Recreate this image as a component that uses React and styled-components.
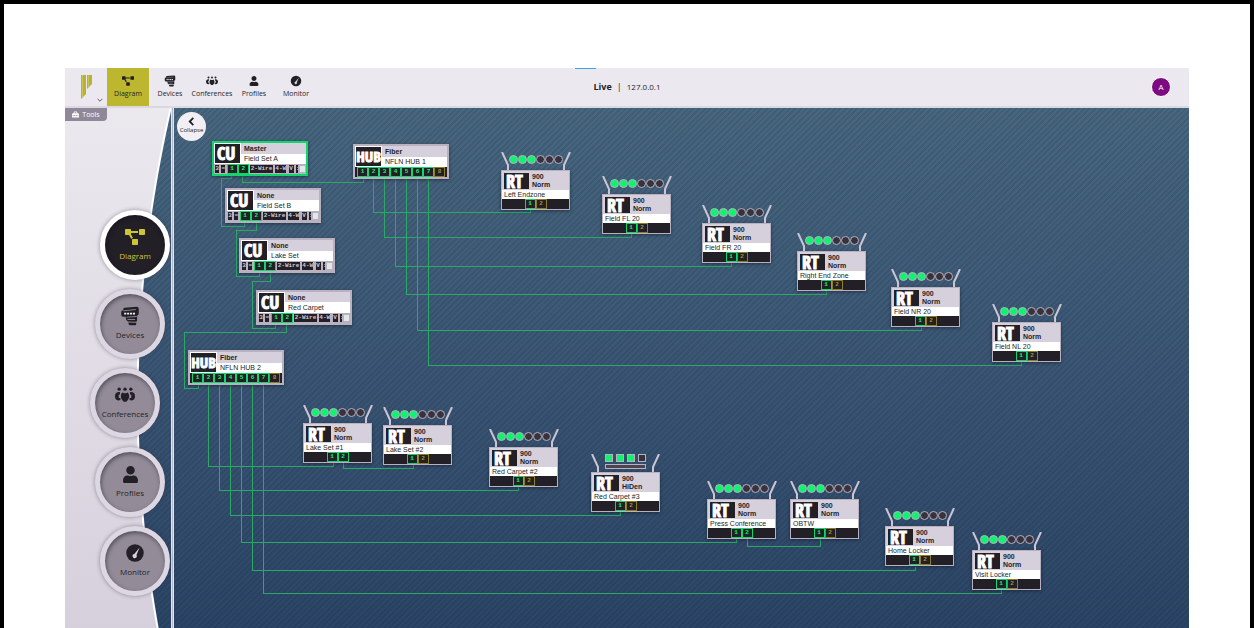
import React from "react";
import styled, { createGlobalStyle, css } from "styled-components";
import { FaProjectDiagram, FaUser, FaToolbox } from "react-icons/fa";

const ui = `"Open Sans", "Noto Sans", sans-serif`;
const node = `"Liberation Sans", Arial, sans-serif`;
const narrow = `"Open Sans Condensed", "Roboto Condensed", Roboto, "Liberation Sans", sans-serif`;

const c = {
  header: "#ece8ef",
  lilac: "#d6cfdc",
  edge: "#b9b1c0",
  ink: "#221f27",
  olive: "#bdb72f",
  green: "#12d66b",
  led: "#0df56f",
  wire: "#2ba865",
  amber: "#8c7f20",
};

const Global = createGlobalStyle`
  *, *::before, *::after { box-sizing: border-box; }
  body { margin: 0; background: #fff; font-family: ${ui}; color: ${c.ink}; }
  a { color: inherit; text-decoration: none; }
`;

const Page = styled.div`
  min-height: 100vh;
  display: flex;
  border: 4px solid #000;
  border-bottom: 0;
  padding: 64px 61px 0;
`;

const AppFrame = styled.div`
  flex: 1;
  min-width: 0;
  display: flex;
  flex-direction: column;
`;

const Header = styled.header`
  position: relative;
  display: grid;
  grid-template-columns: 1fr auto 1fr;
  align-items: center;
  height: 40px;
  background: ${c.header};
  border-bottom: 2px solid #dcd8e2;
  &::before {
    content: "";
    position: absolute;
    top: 0;
    left: calc(50% - 52px);
    width: 21px;
    height: 1px;
    background: #3fa4ee;
  }
`;

const HeaderLeft = styled.div`
  display: flex;
  height: 38px;
`;

const LogoButton = styled.button`
  width: 42px;
  padding: 6px 4px 3px 15px;
  border: 0;
  background: none;
  color: #55505a;
  display: flex;
  align-items: flex-end;
  justify-content: space-between;
`;

const Logo = styled.svg`
  align-self: flex-start;
`;

const TopNav = styled.nav`
  display: flex;
`;

const TopLink = styled.a`
  width: 42px;
  display: flex;
  flex-direction: column;
  align-items: center;
  gap: 2px;
  padding-top: 7px;
  font-size: 7px;
  line-height: 10px;
  background: ${(p) => (p.$active ? c.olive : "transparent")};
`;

const TopIcon = styled.span`
  display: flex;
  align-items: center;
  height: 12px;
  svg { width: ${(p) => (p.$compact ? 10 : 12)}px; height: ${(p) => (p.$compact ? 10 : 12)}px; }
`;

const Status = styled.div`
  display: flex;
  align-items: center;
  gap: 5px;
  font-size: 9px;
  line-height: 12px;
`;

const Address = styled.span`
  font-size: 8px;
`;

const Avatar = styled.button`
  justify-self: end;
  margin-right: 18px;
  width: 20px;
  height: 20px;
  padding: 0;
  border: 1px solid #fff;
  border-radius: 50%;
  background: #7d0a80;
  color: #fff;
  font: 8px/16px ${ui};
`;

const Body = styled.div`
  flex: 1;
  display: flex;
  overflow: hidden;
  background:
    repeating-linear-gradient(135deg, rgba(10, 30, 50, 0.13) 0 2px, transparent 2px 4px),
    linear-gradient(#48677f, #3b5674 50%, #2c4566);
`;

const Sidebar = styled.aside`
  position: relative;
  width: 106px;
  flex: none;
  &::before {
    content: "";
    position: absolute;
    inset: 0;
    background:
      radial-gradient(circle at 1373px 292px, #fff 1301px, transparent 1302px),
      linear-gradient(#ebe8ee, #d6d0dc);
    mask-image: radial-gradient(circle at 1373px 292px, transparent 1299px, #000 1300px);
  }
`;

const SidebarContent = styled.div`
  position: relative;
`;

const ToolsTab = styled.button`
  display: flex;
  align-items: center;
  justify-content: center;
  gap: 3px;
  width: 42px;
  height: 13px;
  padding: 0;
  border: 0;
  border-radius: 0 0 4px 0;
  background: #8f8898;
  color: #fff;
  font: 7px/10px ${ui};
`;

const SideNav = styled.nav`
  display: flex;
  flex-direction: column;
  gap: 9px;
  padding-top: 89px;
`;

const RoundLink = styled.a`
  width: 70px;
  height: 70px;
  margin-left: ${(p) => p.$indent}px;
  border: 5px solid ${(p) => (p.$active ? "#fff" : "#ddd7e3")};
  border-radius: 50%;
  background: ${(p) => (p.$active ? c.ink : "#938c98")};
  color: ${(p) => (p.$active ? "#cdc632" : c.ink)};
  box-shadow: 0 0 4px rgba(50, 40, 60, 0.45), inset 1px 2px 4px rgba(20, 15, 30, 0.5);
  display: flex;
  flex-direction: column;
  align-items: center;
  gap: 3px;
  padding-top: 12px;
  font-size: 8px;
  line-height: 12px;
`;

const RoundIcon = styled.span`
  display: flex;
  align-items: center;
  height: 20px;
  svg { width: ${(p) => (p.$compact ? 17 : 20)}px; height: ${(p) => (p.$compact ? 17 : 20)}px; }
`;

const Divider = styled.div`
  width: 3px;
  flex: none;
  background: #b5b9c9;
  border-left: 1px solid #e4e2ea;
  border-right: 1px solid #e4e2ea;
`;

const Canvas = styled.main`
  position: relative;
  flex: 1;
  min-width: 0;
  overflow: hidden;
  font-family: ${node};
`;

const CollapseButton = styled.button`
  position: absolute;
  left: 3px;
  top: 4px;
  width: 29px;
  height: 29px;
  padding: 5px 0 0;
  border: 0;
  border-radius: 50%;
  background: #f1eef4;
  color: ${c.ink};
  display: flex;
  flex-direction: column;
  align-items: center;
  font: 6px/9px ${ui};
`;

const Wires = styled.svg`
  position: absolute;
  inset: 0;
  width: 100%;
  height: 100%;
  fill: none;
  stroke: ${c.wire};
  shape-rendering: crispEdges;
`;

const placed = css`
  position: absolute;
  left: ${(p) => p.$x}px;
  top: ${(p) => p.$y}px;
`;

const RackCard = styled.article`
  ${placed}
  width: 96px;
  border: 2px solid ${(p) => (p.$selected ? c.green : c.edge)};
  background: #fff;
  box-shadow: 0 1px 3px rgba(10, 15, 30, 0.5);
`;

const RackTop = styled.div`
  display: flex;
  height: 21px;
  background: linear-gradient(${c.lilac} 50%, #fff 50%);
`;

const Badge = styled.div`
  width: 27px;
  flex: none;
  padding-left: ${(p) => (p.$wide ? 0 : 2)}px;
  border: 1px solid ${(p) => (p.$flat ? c.lilac : "#fff")};
  background: ${c.ink};
  color: #fff;
  display: flex;
  align-items: center;
  justify-content: ${(p) => (p.$wide ? "center" : "flex-start")};
  font-family: ${narrow};
  font-weight: 700;
  font-size: ${(p) => (p.$wide ? 15 : 18)}px;
  line-height: 17px;
  -webkit-text-stroke: 1px #fff;
`;

const RackLabels = styled.div`
  padding: 1px 0 0 3px;
  font-size: 7px;
  line-height: 10px;
  white-space: nowrap;
`;

const PortRow = styled.div`
  display: flex;
  justify-content: center;
  height: 10px;
  background: ${c.ink};
`;

const IoRow = styled.div`
  display: flex;
  justify-content: space-between;
  height: 10px;
  background: ${c.edge};
`;

const Port = styled.span`
  width: 11px;
  height: 10px;
  border: 1px solid ${(p) => (p.$on ? c.green : c.amber)};
  background: ${c.ink};
  color: ${(p) => (p.$on ? c.led : "#a5962b")};
  font: 700 6px/8px "Liberation Mono", monospace;
  text-align: center;
`;

const Io = styled.span`
  width: ${(p) => p.$w}px;
  height: 10px;
  border: 1px solid ${c.edge};
  background: ${c.ink};
  color: #d2ccd8;
  font: 700 6px/8px "Liberation Mono", monospace;
  text-align: center;
  overflow: hidden;
  white-space: nowrap;
`;

const Screen = styled.span`
  width: 5px;
  height: 6px;
  margin: 2px 1px;
  background: #dfe9e6;
`;

const RadioUnit = styled.article`
  ${placed}
  width: 69px;
`;

const SignalRow = styled.div`
  display: flex;
  height: 18px;
  svg { width: 8px; height: 18px; flex: none; }
`;

const Leds = styled.div`
  flex: 1;
  display: flex;
  height: 14px;
  align-items: center;
`;

const Led = styled.span`
  width: 9px;
  height: 9px;
  border: 1px solid ${c.edge};
  border-radius: 50%;
  background: ${(p) => (p.$on ? c.led : "#37323c")};
`;

const DenseLeds = styled.div`
  flex: 1;
  display: grid;
  grid-template-columns: repeat(4, 8px);
  column-gap: 3px;
  row-gap: 2px;
  justify-content: center;
  align-content: start;
`;

const SquareLed = styled.span`
  height: 8px;
  border: 1px solid ${c.edge};
  background: ${(p) => (p.$on ? c.led : "#37323c")};
`;

const LedBar = styled.span`
  grid-column: 1 / -1;
  height: 5px;
  border: 1px solid ${c.edge};
  background: #4a4450;
`;

const RadioBox = styled.div`
  border: 1px solid ${c.edge};
  background: ${c.lilac};
  box-shadow: 0 1px 3px rgba(10, 15, 30, 0.5);
`;

const RadioTop = styled.div`
  display: flex;
  height: 19px;
  gap: 2px;
  padding: 1px 1px 0;
`;

const RadioType = styled.div`
  font-size: 7px;
  font-weight: 700;
  line-height: 8px;
  padding-top: 1px;
`;

const RadioName = styled.div`
  height: 9px;
  padding-left: 2px;
  background: #fff;
  font-size: 7px;
  line-height: 9px;
  white-space: nowrap;
`;

const DevicesIcon = () => (
  <svg viewBox="0 0 24 24" fill="currentColor" aria-hidden="true">
    <path d="M4 3.5 Q4 2 6 2 L20 1 Q22.500 1 22.500 3.500 V9 Q22.500 11 20.500 11.500 V17 Q20.500 19 19 19 L9.500 18.500 Q7 18 7 14.500 V13 L4 13 Q1.500 13 1.500 10.500 V7 Q1.500 5 4 5Z" />
    <path d="M4 5.800 L19 4.200" stroke="#b8b0be" strokeWidth=".8" fill="none" />
    <path d="M5 9.200 H18" stroke="#f2eff5" strokeWidth="2" strokeDasharray="2.500 1" fill="none" />
    <path d="M8 13.500 L20 12.500 M9 16.200 H18" stroke="#b8b0be" strokeWidth=".8" fill="none" />
    <path d="M10 19.800 L19.500 20 V21.500 Q19.500 23 18 23 H12 Q10 23 10 19.800Z" />
  </svg>
);

const ConferencesIcon = () => (
  <svg viewBox="0 0 24 24" fill="currentColor" aria-hidden="true">
    <circle cx="5" cy="5" r="2" />
    <circle cx="12" cy="5" r="2" />
    <circle cx="19" cy="5" r="2" />
    <path d="M6 8.500 Q0 8 0 13.500 Q0 18 4 18.500 L6.500 18 V15.500 H4.500 V11.500 H6Z" />
    <path d="M18 8.500 Q24 8 24 13.500 Q24 18 20 18.500 L17.500 18 V15.500 H19.500 V11.500 H18Z" />
    <path d="M8.500 9 Q12 11 15.500 9 Q18.500 13 15.500 18 L13.500 20 H10.500 L8.500 18 Q5.500 13 8.500 9Z" />
  </svg>
);

const MonitorIcon = () => (
  <svg viewBox="0 0 24 24" fill="currentColor" aria-hidden="true">
    <circle cx="12" cy="12" r="10.500" />
    <path d="M17.500 5.500 L13.800 14.500 A2.500 2.500 0 1 1 11.200 13.200Z" fill="#d9d3df" />
  </svg>
);

const Chevron = ({ d, size, weight }) => (
  <svg width={size} height={size} viewBox="0 0 10 10" fill="none" stroke="currentColor" strokeWidth={weight} aria-hidden="true">
    <path d={d} />
  </svg>
);

const sections = [
  { label: "Diagram", Icon: FaProjectDiagram, indent: 35 },
  { label: "Devices", Icon: DevicesIcon, indent: 30 },
  { label: "Conferences", Icon: ConferencesIcon, indent: 25 },
  { label: "Profiles", Icon: FaUser, indent: 30, compact: true },
  { label: "Monitor", Icon: MonitorIcon, indent: 35 },
];

const controlUnits = [
  { x: 38, y: 33, role: "Master", name: "Field Set A", selected: true },
  { x: 51, y: 80, role: "None", name: "Field Set B" },
  { x: 65, y: 130, role: "None", name: "Lake Set" },
  { x: 82, y: 182, role: "None", name: "Red Carpet" },
];

const hubs = [
  { x: 179, y: 36, name: "NFLN HUB 1" },
  { x: 14, y: 242, name: "NFLN HUB 2" },
];

const radios = [
  { x: 327, y: 44, name: "Left Endzone" },
  { x: 428, y: 68, name: "Field FL 20" },
  { x: 528, y: 97, name: "Field FR 20" },
  { x: 623, y: 125, name: "Right End Zone" },
  { x: 717, y: 161, name: "Field NR 20" },
  { x: 818, y: 196, name: "Field NL 20" },
  { x: 129, y: 297, name: "Lake Set #1", linked: true },
  { x: 209, y: 299, name: "Lake Set #2" },
  { x: 315, y: 321, name: "Red Carpet #2" },
  { x: 417, y: 346, name: "Red Carpet #3", dense: true },
  { x: 533, y: 373, name: "Press Conference", linked: true },
  { x: 616, y: 373, name: "OBTW" },
  { x: 711, y: 400, name: "Home Locker" },
  { x: 798, y: 424, name: "Visit Locker" },
];

const wires = [
  "M57 67V70H47V118H70V114",
  "M68 67V74H189V71",
  "M82 114V122H62V168H85V165",
  "M96 165V173H78V220H101V217",
  "M112 217V224H10V280H24V277",
  "M199 71V104H356V102",
  "M210 71V129H457V126",
  "M221 71V158H557V155",
  "M232 71V186H652V183",
  "M243 71V222H747V219",
  "M254 71V257H847V254",
  "M34 277V358H159V355",
  "M169 355V360H239V357",
  "M45 277V382H344V379",
  "M56 277V407H446V404",
  "M67 277V434H562V431",
  "M573 431V438H646V431",
  "M78 277V462H741V459",
  "M89 277V485H827V482",
];

const ControlUnit = ({ x, y, role, name, selected }) => (
  <RackCard $x={x} $y={y} $selected={selected}>
    <RackTop>
      <Badge>CU</Badge>
      <RackLabels>
        <b>{role}</b>
        <div>{name}</div>
      </RackLabels>
    </RackTop>
    <IoRow>
      <Io $w={6}>3</Io>
      <Io $w={6}>=</Io>
      <Port $on>1</Port>
      <Port $on>2</Port>
      <Io $w={25}>2-Wire</Io>
      <Io $w={13}>4-W</Io>
      <Io $w={7}>V</Io>
      <Io $w={4}>:</Io>
      <Screen />
    </IoRow>
  </RackCard>
);

const Hub = ({ x, y, name }) => (
  <RackCard $x={x} $y={y}>
    <RackTop>
      <Badge $wide>HUB</Badge>
      <RackLabels>
        <b>Fiber</b>
        <div>{name}</div>
      </RackLabels>
    </RackTop>
    <PortRow>
      {[1, 2, 3, 4, 5, 6, 7, 8].map((n) => (
        <Port key={n} $on={n < 8}>{n}</Port>
      ))}
    </PortRow>
  </RackCard>
);

const Antenna = ({ d }) => (
  <svg viewBox="0 0 8 18" fill="none" stroke="#cbc4d2" strokeWidth="2" aria-hidden="true">
    <path d={d} />
  </svg>
);

const Radio = ({ x, y, name, linked, dense }) => (
  <RadioUnit $x={x} $y={y}>
    <SignalRow>
      <Antenna d="M1 0 L7 13 V18" />
      {dense ? (
        <DenseLeds>
          {[0, 1, 2, 3].map((n) => (
            <SquareLed key={n} $on={n < 3} />
          ))}
          <LedBar />
        </DenseLeds>
      ) : (
        <Leds>
          {[0, 1, 2, 3, 4, 5].map((n) => (
            <Led key={n} $on={n < 3} />
          ))}
        </Leds>
      )}
      <Antenna d="M7 0 L1 13 V18" />
    </SignalRow>
    <RadioBox>
      <RadioTop>
        <Badge $flat>RT</Badge>
        <RadioType>
          900
          <br />
          {dense ? "HiDen" : "Norm"}
        </RadioType>
      </RadioTop>
      <RadioName>{name}</RadioName>
      <PortRow>
        <Port $on>1</Port>
        <Port $on={linked}>2</Port>
      </PortRow>
    </RadioBox>
  </RadioUnit>
);

export default function App() {
  return (
    <Page>
      <Global />
      <AppFrame>
        <Header>
          <HeaderLeft>
            <LogoButton aria-label="Main menu">
              <Logo width="12" height="26" viewBox="0 0 12 26" aria-hidden="true">
                <path d="M1 1 H6 V20 L1 25Z M7 1 H12 V10 L7 15Z" fill="#b8b32f" />
                <path d="M2.500 1 V23 M8.500 1 V13" stroke="#d0cc6a" strokeWidth=".7" fill="none" />
              </Logo>
              <Chevron d="M1 3 L5 7 L9 3" size={6} weight={1.5} />
            </LogoButton>
            <TopNav aria-label="Sections">
              {sections.map(({ label, Icon, compact }, i) => (
                <TopLink key={label} href={`#${label}`} $active={i === 0}>
                  <TopIcon $compact={compact}>
                    <Icon />
                  </TopIcon>
                  {label}
                </TopLink>
              ))}
            </TopNav>
          </HeaderLeft>
          <Status>
            <b>Live</b>
            <span>|</span>
            <Address>127.0.0.1</Address>
          </Status>
          <Avatar aria-label="Account">A</Avatar>
        </Header>
        <Body>
          <Sidebar>
            <SidebarContent>
              <ToolsTab>
                <FaToolbox />
                Tools
              </ToolsTab>
              <SideNav aria-label="Views">
                {sections.map(({ label, Icon, indent, compact }, i) => (
                  <RoundLink key={label} href={`#${label}`} $indent={indent} $active={i === 0}>
                    <RoundIcon $compact={compact}>
                      <Icon />
                    </RoundIcon>
                    {label}
                  </RoundLink>
                ))}
              </SideNav>
            </SidebarContent>
          </Sidebar>
          <Divider />
          <Canvas>
            <Wires aria-hidden="true">
              {wires.map((d) => (
                <path key={d} d={d} />
              ))}
            </Wires>
            {controlUnits.map((u) => (
              <ControlUnit key={u.name} {...u} />
            ))}
            {hubs.map((h) => (
              <Hub key={h.name} {...h} />
            ))}
            {radios.map((r) => (
              <Radio key={r.name} {...r} />
            ))}
            <CollapseButton>
              <Chevron d="M7 1 L3 5 L7 9" size={9} weight={2} />
              Collapse
            </CollapseButton>
          </Canvas>
        </Body>
      </AppFrame>
    </Page>
  );
}
